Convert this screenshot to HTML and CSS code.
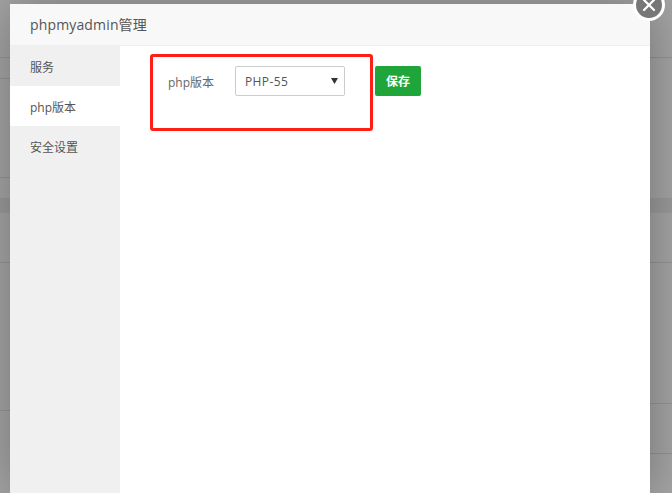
FILE: index.html
```html
<!DOCTYPE html>
<html lang="zh-CN">
<head>
<meta charset="utf-8">
<title>phpmyadmin管理</title>
<link rel="stylesheet" href="styles.css">
</head>
<body>
<div class="page">
  <div class="strip strip-left">
    <div class="line l57"></div>
    <div class="line l78"></div>
    <div class="line l177"></div>
    <div class="band"></div>
    <div class="line l262"></div>
    <div class="line l410"></div>
  </div>
  <div class="strip strip-right">
    <div class="line l57"></div>
    <div class="band r198"></div>
    <div class="line l262"></div>
    <div class="line r403"></div>
    <div class="line r453"></div>
  </div>
</div>
<section class="modal">
  <header class="modal-title">phpmyadmin管理</header>
  <div class="modal-body">
    <nav class="side">
      <div class="side-item">服务</div>
      <div class="side-item active">php版本</div>
      <div class="side-item">安全设置</div>
    </nav>
    <main class="content">
      <div class="form-row">
        <label class="form-label">php版本</label>
        <div class="select">
          <span>PHP-55</span>
          <svg class="caret" width="7" height="6" viewBox="0 0 7 6"><path d="M0 0h7L3.5 6z" fill="#333"/></svg>
        </div>
        <button class="save">保存</button>
      </div>
    </main>
  </div>
</section>
<div class="annotation"></div>
<button class="close" aria-label="关闭">
  <svg width="16" height="16" viewBox="0 0 16 16"><path d="M3 3l10 10M13 3L3 13" stroke="#fff" stroke-width="2.2" stroke-linecap="round" fill="none"/></svg>
</button>
</body>
</html>
```

FILE: styles.css
```css
* { box-sizing: border-box; }
html, body { margin: 0; height: 100%; overflow: hidden; }
body {
  width: 672px;
  height: 493px;
  position: relative;
  font-family: "Open Sans", "Noto Sans CJK SC", sans-serif;
  color: #555;
}
.page {
  height: 493px;
  background: #a4a4a4;
  display: flex;
  justify-content: space-between;
}
.strip { flex: none; display: flex; flex-direction: column; }
.strip-left { width: 10px; }
.strip-right { width: 22px; }
.line { flex: none; height: 1px; background: rgba(0, 0, 0, .1); }
.band { flex: none; height: 15px; margin-top: 20px; background: rgba(0, 0, 0, .06); }
.l57 { margin-top: 57px; }
.l78 { margin-top: 20px; }
.l177 { margin-top: 98px; }
.l262 { margin-top: 49px; }
.l410 { margin-top: 147px; }
.r198 { margin-top: 140px; }
.r403 { margin-top: 140px; }
.r453 { margin-top: 49px; }
.modal {
  position: absolute;
  left: 10px;
  top: 4px;
  width: 640px;
  height: 489px;
  background: #fff;
  border-radius: 2px 2px 0 0;
  box-shadow: 1px 1px 50px rgba(0, 0, 0, .3);
  display: flex;
  flex-direction: column;
}
.modal-title {
  flex: none;
  height: 42px;
  padding-left: 20px;
  font-size: 14px;
  line-height: 42px;
  letter-spacing: .15px;
  color: #555;
  background: #f8f8f8;
  border-bottom: 1px solid #eee;
}
.modal-body { flex: 1; display: flex; min-height: 0; }
.side { flex: none; width: 110px; background: #f0f0f0; }
.side-item {
  height: 40px;
  padding: 4px 0 0 20px;
  font-size: 12px;
  line-height: 36px;
  color: #555;
}
.side-item.active { background: #fff; }
.content { flex: 1; padding: 20px 0 0 48px; }
.form-row { display: flex; align-items: flex-start; }
.form-label {
  width: 67px;
  font-size: 12px;
  line-height: 34px;
  color: #666;
}
.select {
  width: 110px;
  height: 30px;
  border: 1px solid #ccc;
  border-radius: 2px;
  background: #fff;
  padding: 0 9px;
  display: flex;
  align-items: center;
  justify-content: space-between;
  font-size: 12px;
  letter-spacing: .4px;
  color: #555;
}
.caret { margin-right: -3px; }
.save {
  margin-left: 30px;
  width: 46px;
  height: 30px;
  border: 0;
  border-radius: 2px;
  padding: 0;
  background: #20a53a;
  color: #fff;
  font: bold 12px "Open Sans", "Noto Sans CJK SC", sans-serif;
}
.annotation {
  position: absolute;
  left: 150px;
  top: 54px;
  width: 223px;
  height: 77px;
  border: 3px solid #ff1f14;
  border-radius: 3px;
}
.close {
  position: absolute;
  left: 633px;
  top: -11px;
  width: 32px;
  height: 32px;
  padding: 0;
  border: 3px solid #fff;
  border-radius: 50%;
  background: #777;
  display: flex;
  align-items: center;
  justify-content: center;
}
```
